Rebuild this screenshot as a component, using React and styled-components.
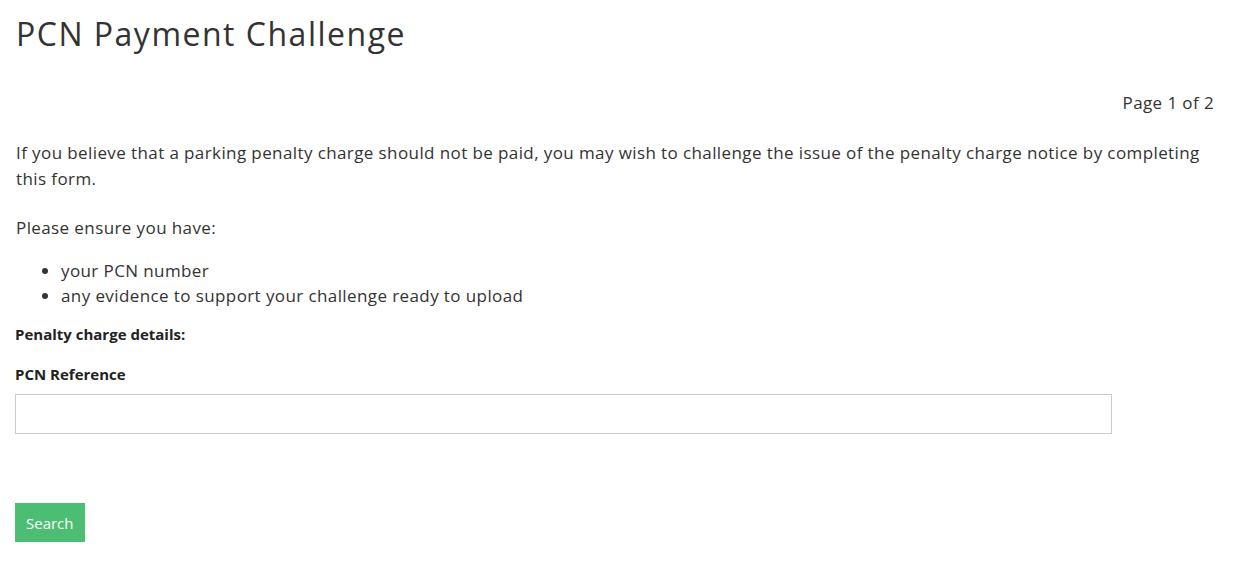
import React from 'react';
import styled, { createGlobalStyle } from 'styled-components';

const GlobalStyle = createGlobalStyle`
  body {
    margin: 0;
    background: #ffffff;
    color: #333333;
    font-family: 'Open Sans', 'Liberation Sans', sans-serif;
  }
`;

const Page = styled.div`
  padding: 14px 24px 0 15px;
`;

const Title = styled.h1`
  font-family: 'Open Sans', 'Liberation Sans', sans-serif;
  font-weight: 500;
  font-size: 32px;
  letter-spacing: 1.5px;
  color: #333333;
  margin: 0 0 0 1px;
  line-height: 40px;
`;

const PageCount = styled.div`
  text-align: right;
  font-size: 17px;
  letter-spacing: 0.4px;
  line-height: 26px;
  margin-top: 36px;
`;

const Text = styled.p`
  font-size: 17px;
  letter-spacing: 0.4px;
  line-height: 26px;
  margin: ${p => p.$top || 0}px 0 0 1px;
`;

const List = styled.ul`
  margin: 17px 0 0;
  padding-left: 46px;
  font-size: 17px;
  letter-spacing: 0.4px;
  line-height: 25px;
`;

const Label = styled.div`
  font-size: 15px;
  font-weight: 700;
  line-height: 20px;
  color: #222222;
  margin-top: ${p => p.$top}px;
`;

const Input = styled.input`
  display: block;
  box-sizing: border-box;
  width: 1097px;
  height: 40px;
  margin-top: 10px;
  border: 1px solid #c3ced6;
  border-radius: 0;
  padding: 6px 12px;
  font-size: 16px;
  font-family: inherit;
  outline: none;
`;

const Button = styled.button`
  display: block;
  margin-top: 69px;
  height: 39px;
  padding: 0 11px;
  background: #4cbe73;
  color: #ffffff;
  border: none;
  border-radius: 0;
  font-family: inherit;
  font-size: 15px;
  cursor: pointer;
`;

export default function App() {
  return (
    <>
      <GlobalStyle />
      <Page>
        <Title>PCN Payment Challenge</Title>
        <PageCount>Page 1 of 2</PageCount>
        <Text $top={24}>
          If you believe that a parking penalty charge should not be paid, you may wish to challenge the issue of the penalty charge notice by completing this form.
        </Text>
        <Text $top={23}>Please ensure you have:</Text>
        <List>
          <li>your PCN number</li>
          <li>any evidence to support your challenge ready to upload</li>
        </List>
        <Label $top={16}>Penalty charge details:</Label>
        <Label $top={20}>PCN Reference</Label>
        <Input type="text" />
        <Button>Search</Button>
      </Page>
    </>
  );
}
